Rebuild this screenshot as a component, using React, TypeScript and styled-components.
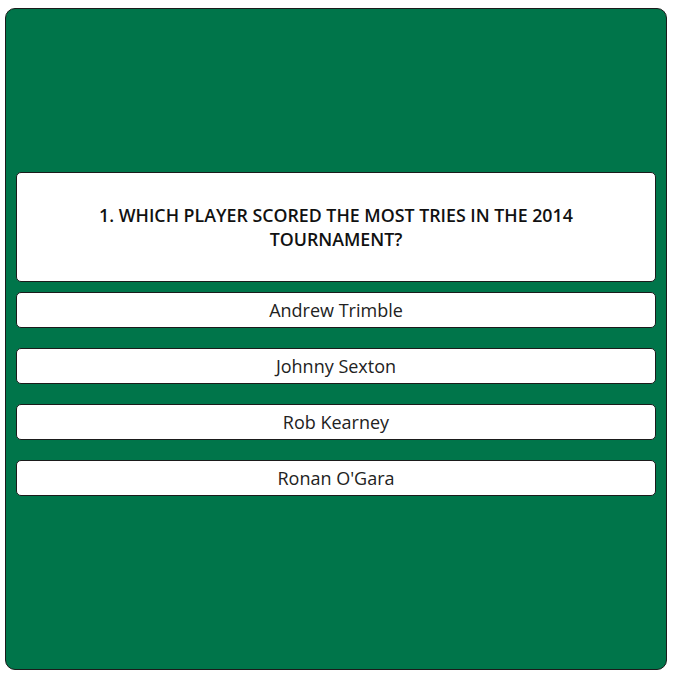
import { createGlobalStyle } from "styled-components"
import styled from "styled-components"

const questions = [
    {
        question: "1. Which player scored the most tries in the 2014 tournament?",
        answers: ["Andrew Trimble", "Johnny Sexton", "Rob Kearney", "Ronan O'Gara"],
    },
]

export default function App() {
    const current = questions[0]

    return (
        <>
            <GlobalStyle />
            <Page>
                <Card>
                    <Question>{current.question}</Question>
                    {current.answers.map((answer) => (
                        <Answer key={answer}>{answer}</Answer>
                    ))}
                </Card>
            </Page>
        </>
    )
}

const GlobalStyle = createGlobalStyle`
    body {
        margin: 0;
        font-family: "Open Sans", "Noto Sans", sans-serif;
        background: #ffffff;
    }
`

const Page = styled.div`
    padding: 8px 8px 0 5px;
`

const Card = styled.div`
    box-sizing: border-box;
    width: 662px;
    height: 662px;
    background-color: #00754a;
    border: 1px solid #1b1b1b;
    border-radius: 10px;
    padding: 0 10px;

    display: flex;
    flex-direction: column;
    justify-content: center;
`

const Question = styled.div`
    box-sizing: border-box;
    height: 110px;
    background-color: #ffffff;
    border: 1px solid #1b1b1b;
    border-radius: 5px;
    padding: 0 40px;

    display: flex;
    align-items: center;
    justify-content: center;
    text-align: center;

    font-size: 17.8px;
    font-weight: 600;
    line-height: 24px;
    text-transform: uppercase;
    color: #111111;
`

const Answer = styled.button`
    box-sizing: border-box;
    height: 36px;
    margin: 10px 0;
    background-color: #ffffff;
    border: 1px solid #1b1b1b;
    border-radius: 5px;
    padding: 0;

    font-family: "Open Sans", "Noto Sans", sans-serif;
    font-size: 18px;
    color: #222222;
    cursor: pointer;
`
